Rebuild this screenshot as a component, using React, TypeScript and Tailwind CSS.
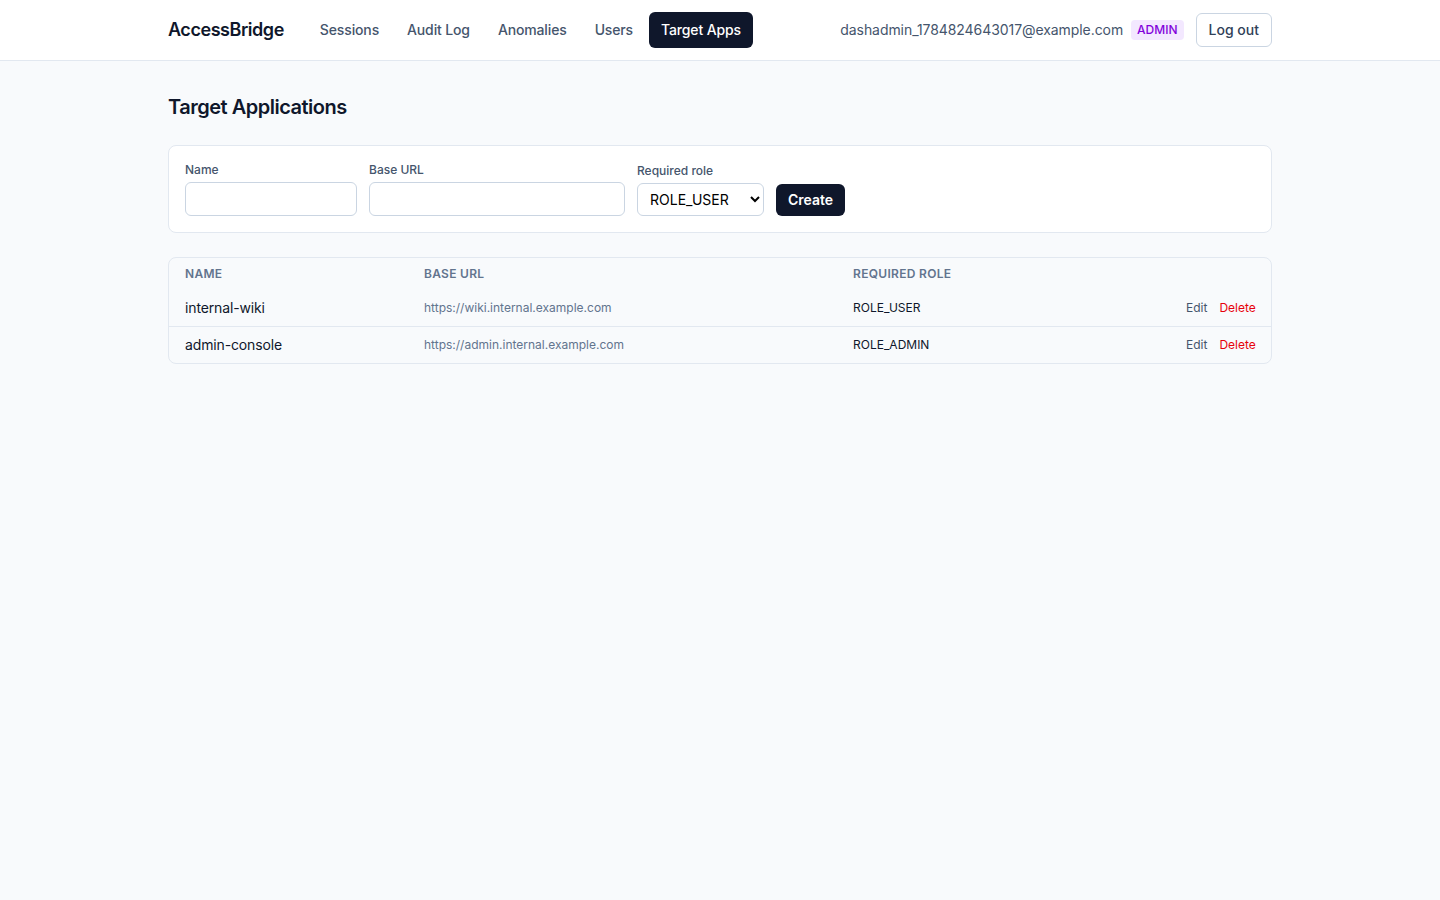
import { useState } from 'react'

interface TargetApp {
  id: number
  name: string
  baseUrl: string
  requiredRole: string
}

const apps: TargetApp[] = [
  { id: 1, name: 'internal-wiki', baseUrl: 'https://wiki.internal.example.com', requiredRole: 'ROLE_USER' },
  { id: 2, name: 'admin-console', baseUrl: 'https://admin.internal.example.com', requiredRole: 'ROLE_ADMIN' },
]

const navItems = ['Sessions', 'Audit Log', 'Anomalies', 'Users', 'Target Apps']

export default function App() {
  const [name, setName] = useState('')
  const [baseUrl, setBaseUrl] = useState('')
  const [role, setRole] = useState('ROLE_USER')

  return (
    <div className="min-h-screen bg-slate-50 text-slate-900 font-['Inter',sans-serif]">
      {/* Header */}
      <header className="bg-white border-b border-slate-200">
        <div className="max-w-6xl mx-auto px-6 h-[60px] flex items-center justify-between">
          <div className="flex items-center gap-6">
            <span className="text-lg font-semibold tracking-tight text-slate-900">AccessBridge</span>
            <nav className="flex items-center gap-1">
              {navItems.map((n) => (
                <a
                  key={n}
                  href="#"
                  className={
                    n === 'Target Apps'
                      ? 'px-3 py-2 rounded-md text-sm font-medium tracking-[-0.01em] bg-slate-900 text-white'
                      : 'px-3 py-2 rounded-md text-sm font-medium tracking-[-0.01em] text-slate-600'
                  }
                >
                  {n}
                </a>
              ))}
            </nav>
          </div>
          <div className="flex items-center">
            <span className="text-sm tracking-[-0.005em] text-slate-600">dashadmin_1784824643017@example.com</span>
            <span className="ml-2 text-xs font-medium px-1.5 py-0.5 rounded bg-purple-100 text-purple-700">ADMIN</span>
            <button className="ml-3 text-sm font-medium text-slate-700 border border-slate-300 rounded-md px-3 py-1.5 bg-white">
              Log out
            </button>
          </div>
        </div>
      </header>

      <main className="max-w-6xl mx-auto px-6 py-8">
        <h1 className="text-xl font-semibold tracking-tight text-slate-900 mb-6">Target Applications</h1>

        {/* Formulario */}
        <div className="bg-white border border-slate-200 rounded-lg p-4 flex items-end gap-3">
          <label className="flex flex-col">
            <span className="text-xs font-medium text-slate-600 mb-1">Name</span>
            <input
              value={name}
              onChange={(e) => setName(e.target.value)}
              className="w-[172px] h-[34px] border border-slate-300 rounded-md px-2 text-sm bg-white"
            />
          </label>
          <label className="flex flex-col">
            <span className="text-xs font-medium text-slate-600 mb-1">Base URL</span>
            <input
              value={baseUrl}
              onChange={(e) => setBaseUrl(e.target.value)}
              className="w-[256px] h-[34px] border border-slate-300 rounded-md px-2 text-sm bg-white"
            />
          </label>
          <label className="flex flex-col">
            <span className="text-xs font-medium text-slate-600 mb-1">Required role</span>
            <select
              value={role}
              onChange={(e) => setRole(e.target.value)}
              className="w-[127px] h-[33px] border border-slate-300 rounded-md px-2 text-sm text-black bg-white"
            >
              <option>ROLE_USER</option>
              <option>ROLE_ADMIN</option>
            </select>
          </label>
          <button className="h-8 px-3 rounded-md bg-slate-900 text-white text-sm font-semibold">Create</button>
        </div>

        {/* Tabla */}
        <div className="mt-6 border border-slate-200 rounded-lg overflow-hidden">
          <table className="w-full table-fixed text-left text-xs">
            <thead>
              <tr>
                <th className="w-[239px] px-4 py-2 text-xs font-semibold uppercase tracking-wide text-slate-500">Name</th>
                <th className="w-[429px] px-4 py-2 text-xs font-semibold uppercase tracking-wide text-slate-500">Base URL</th>
                <th className="w-[333px] px-4 py-2 text-xs font-semibold uppercase tracking-wide text-slate-500">Required role</th>
                <th className="px-4 py-2"></th>
              </tr>
            </thead>
            <tbody>
              {apps.map((app, i) => (
                <tr key={app.id} className={i > 0 ? 'border-t border-slate-200' : ''}>
                  <td className="px-4 py-2 text-sm tracking-[-0.01em] text-slate-900">{app.name}</td>
                  <td className="px-4 py-2 text-xs text-slate-500">{app.baseUrl}</td>
                  <td className="px-4 py-2 text-xs text-slate-900">{app.requiredRole}</td>
                  <td className="px-4 py-2 text-xs text-right whitespace-nowrap">
                    <button className="text-xs text-slate-600">Edit</button>
                    <button className="text-xs text-red-600 ml-3">Delete</button>
                  </td>
                </tr>
              ))}
            </tbody>
          </table>
        </div>
      </main>
    </div>
  )
}
